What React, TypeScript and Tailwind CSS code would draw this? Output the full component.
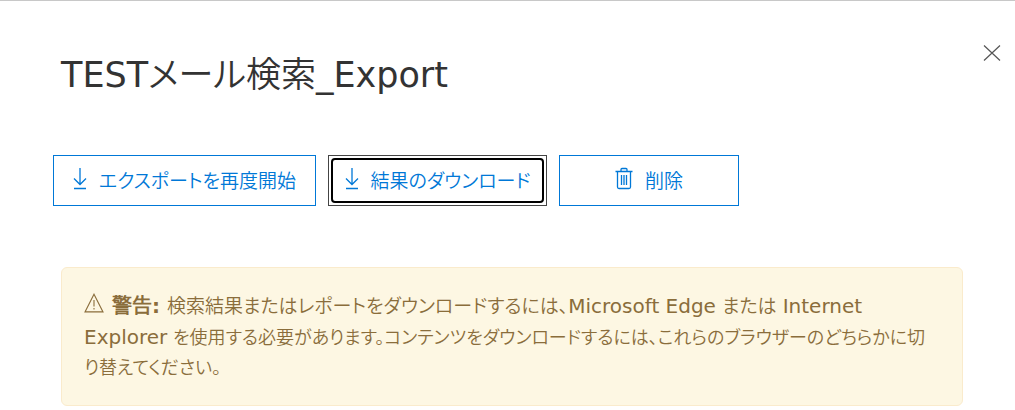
import type { ReactNode } from "react"
import { clsx } from "clsx"

function DownloadIcon() {
  return (
    <svg width="14" height="24" viewBox="0 0 14 24" fill="none" stroke="currentColor" strokeWidth="1.3" aria-hidden="true">
      <path d="M7 1V17.5M1 11.5L7 17.5L13 11.5M1 21.5H13" />
    </svg>
  )
}

function TrashIcon() {
  return (
    <svg width="18" height="24" viewBox="0 0 18 24" fill="none" stroke="currentColor" strokeWidth="1.3" aria-hidden="true">
      <path d="M0.5 4.5H17.5M6 4.5V2.5Q6 1.5 7 1.5H11Q12 1.5 12 2.5V4.5M2.5 4.5V20Q2.5 21.5 4 21.5H14Q15.5 21.5 15.5 20V4.5M6.5 8V18M9 8V18M11.5 8V18" />
    </svg>
  )
}

function WarningIcon() {
  return (
    <svg className="mr-2 inline-block align-baseline" width="20" height="20" viewBox="0 0 20 20" fill="none" stroke="currentColor" strokeWidth="1.1" aria-hidden="true">
      <path d="M10 1.2L19 18.9H1ZM10 7V13.5M10 15V16.5" />
    </svg>
  )
}

type ActionButtonProps = {
  icon: ReactNode
  label: string
  className: string
  focused?: boolean
}

function ActionButton({ icon, label, className, focused = false }: ActionButtonProps) {
  return (
    <button
      type="button"
      className={clsx("shrink-0 border bg-white p-0.5 text-[19px] text-[#0078d7]", focused ? "border-[#444]" : "border-[#0078d7]", className)}
    >
      <span className={clsx("flex h-[45px] items-center justify-center gap-3 rounded border-2", focused ? "border-black" : "border-transparent")}>
        <span className="mb-1">{icon}</span>
        <span className="pt-0.5">{label}</span>
      </span>
    </button>
  )
}

export default function App() {
  return (
    <main className="border-t border-[#c8c8c8] bg-white font-['DejaVu_Sans','Noto_Sans_CJK_JP_DemiLight','Noto_Sans_CJK_JP',sans-serif] [font-feature-settings:'palt']" lang="ja">
      <header className="flex items-start justify-between pt-11 pr-3.5 pl-[61px]">
        <h1 className="mt-2 text-[35px] leading-[44px] text-[#333]">TESTメール検索_Export</h1>
        <button type="button" aria-label="閉じる" className="text-[#555]">
          <svg width="18" height="16" viewBox="0 0 18 16" fill="none" stroke="currentColor" strokeWidth="1.2" aria-hidden="true">
            <path d="M1 0.5L17 15.5M17 0.5L1 15.5" />
          </svg>
        </button>
      </header>

      <div className="mt-[58px] flex gap-3 pl-[53px]">
        <ActionButton icon={<DownloadIcon />} label="エクスポートを再度開始" className="w-[263px]" />
        <ActionButton icon={<DownloadIcon />} label="結果のダウンロード" className="w-[219px]" focused />
        <ActionButton icon={<TrashIcon />} label="削除" className="w-[180px]" />
      </div>

      <div className="mt-[61px] mr-[52px] mb-1 ml-[61px] rounded-md border border-[#faebcc] bg-[#fdf7e3] pt-[23px] pr-4 pb-[22px] pl-[22px] text-lg leading-[30px] text-[#8a6d3b]">
        <p>
          <WarningIcon />
          <strong className="text-xl leading-[30px]">警告: </strong>
          <span className="text-[19px]">
            検索結果またはレポートをダウンロードするには、
            <span className="text-xl leading-[30px]">Microsoft Edge</span> または <span className="text-xl leading-[30px]">Internet</span>
          </span>
          <br />
          <span className="text-xl leading-[30px]">Explorer</span> を使用する必要があります。コンテンツをダウンロードするには、これらのブラウザーのどちらかに切
          <br />
          り替えてください。
        </p>
      </div>
    </main>
  )
}
